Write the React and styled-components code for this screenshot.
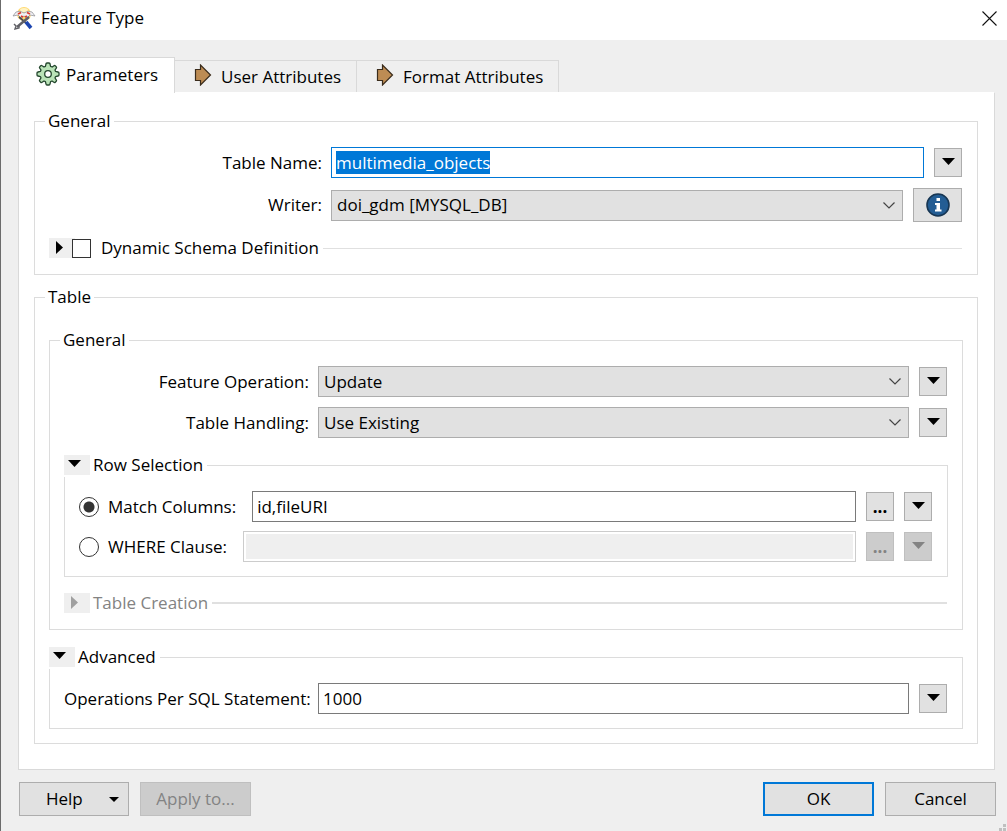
import React from 'react'
import styled, { createGlobalStyle } from 'styled-components'

const Page = createGlobalStyle`
  * {
    box-sizing: border-box;
  }
  body {
    margin: 0;
    background: #efefef;
    color: #000;
    font-family: 'Open Sans', 'Noto Sans', sans-serif;
    font-size: 17px;
    line-height: 24px;
  }
  button, input, select {
    font: inherit;
    color: inherit;
    margin: 0;
  }
`

const App = () => {
  return (
    <Dialog>
      <Page />
      <TitleBar>
        <AppIcon />
        <Title>Feature Type</Title>
        <CloseButton aria-label="Close">
          <svg width="15" height="15" viewBox="0 0 15 15" stroke="#111" strokeWidth="1.1">
            <path d="M0.5 0.5 14.5 14.5M14.5 0.5 0.5 14.5" />
          </svg>
        </CloseButton>
      </TitleBar>

      <Body>
        <Tabs role="tablist">
          <Tab role="tab" aria-selected="true" $active>
            <GearIcon />
            Parameters
          </Tab>
          <Tab role="tab" aria-selected="false">
            <ArrowIcon />
            User Attributes
          </Tab>
          <Tab role="tab" aria-selected="false">
            <ArrowIcon />
            Format Attributes
          </Tab>
        </Tabs>

        <Panel role="tabpanel">
          <Group>
            <Legend>General</Legend>
            <Fields $label="273px">
              <Label htmlFor="table-name">Table Name:</Label>
              <Row>
                <TextBox id="table-name" defaultValue="multimedia_objects" $focused autoFocus onFocus={(e) => e.target.select()} />
                <MenuButton />
              </Row>
              <Label htmlFor="writer">Writer:</Label>
              <Row>
                <DropDown id="writer" value="doi_gdm [MYSQL_DB]" />
                <InfoButton aria-label="Writer information">
                  <InfoIcon />
                </InfoButton>
              </Row>
            </Fields>
            <Section>
              <Expander aria-label="Expand">
                <TriangleRight />
              </Expander>
              <CheckLabel>
                <CheckBox type="checkbox" />
                Dynamic Schema Definition
              </CheckLabel>
              <Line />
            </Section>
          </Group>

          <Group $outer>
            <Legend>Table</Legend>
            <Group>
              <Legend>General</Legend>
              <Fields $label="245px">
                <Label htmlFor="operation">Feature Operation:</Label>
                <Row>
                  <DropDown id="operation" value="Update" />
                  <MenuButton />
                </Row>
                <Label htmlFor="handling">Table Handling:</Label>
                <Row>
                  <DropDown id="handling" value="Use Existing" />
                  <MenuButton />
                </Row>
              </Fields>

              <Group $fold>
                <FoldLegend>
                  <Expander aria-label="Collapse" $open>
                    <TriangleDown />
                  </Expander>
                  Row Selection
                </FoldLegend>
                <Choices>
                  <Row>
                    <RadioLabel>
                      <Radio type="radio" name="selection" defaultChecked />
                      Match Columns:
                    </RadioLabel>
                    <TextBox aria-label="Match Columns" defaultValue="id,fileURI" />
                    <MoreButton aria-label="Browse columns">...</MoreButton>
                    <MenuButton />
                  </Row>
                  <Row>
                    <RadioLabel>
                      <Radio type="radio" name="selection" />
                      WHERE Clause:
                    </RadioLabel>
                    <TextBox aria-label="WHERE Clause" disabled />
                    <MoreButton aria-label="Edit clause" disabled>...</MoreButton>
                    <MenuButton disabled />
                  </Row>
                </Choices>
              </Group>

              <Section $disabled>
                <Expander aria-label="Expand" disabled>
                  <TriangleRight />
                </Expander>
                <SectionTitle>Table Creation</SectionTitle>
                <Line $thick />
              </Section>
            </Group>

            <Group $fold>
              <FoldLegend>
                <Expander aria-label="Collapse" $open>
                  <TriangleDown />
                </Expander>
                Advanced
              </FoldLegend>
              <Fields $label="245px">
                <Label htmlFor="per-statement">Operations Per SQL Statement:</Label>
                <Row>
                  <TextBox id="per-statement" defaultValue="1000" />
                  <MenuButton />
                </Row>
              </Fields>
            </Group>
          </Group>
        </Panel>

        <Footer>
          <HelpButton>
            <span>Help</span>
            <svg width="10" height="5" viewBox="0 0 10 5">
              <path d="M0 0H10L5 5Z" />
            </svg>
          </HelpButton>
          <PushButton disabled>Apply to...</PushButton>
          <Spacer />
          <PushButton $primary>OK</PushButton>
          <PushButton>Cancel</PushButton>
        </Footer>
      </Body>
      <Grip width="7" height="7" viewBox="0 0 7 7" fill="#bfbfbf">
        <path d="M4 0h3v3h-3zM4 4h3v3h-3zM0 4h3v3h-3z" />
      </Grip>
    </Dialog>
  )
}

export default App

const DropDown = ({ id, value }) => (
  <SelectWrap>
    <Select id={id} defaultValue={value}>
      <option>{value}</option>
    </Select>
    <Chevron width="12" height="7" viewBox="0 0 12 7" fill="none" stroke="#444" strokeWidth="1.2">
      <path d="M0.5 0.5 6 6 11.5 0.5" />
    </Chevron>
  </SelectWrap>
)

const MenuButton = ({ disabled }) => (
  <SmallButton aria-label="More options" disabled={disabled}>
    <TriangleDown />
  </SmallButton>
)

const TriangleDown = () => (
  <svg width="13" height="7" viewBox="0 0 13 7" fill="currentColor">
    <path d="M0 0H13L6.5 7Z" />
  </svg>
)

const TriangleRight = () => (
  <svg width="7" height="13" viewBox="0 0 7 13" fill="currentColor">
    <path d="M0 0V13L7 6.5Z" />
  </svg>
)

const ArrowIcon = () => (
  <svg width="18" height="22" viewBox="0 0 18 22">
    <path d="M1.5 5.5H6.5V1L16.5 11 6.5 21V16.5H1.5Z" fill="#bd8c54" stroke="#3a2c1c" strokeWidth="1.2" />
  </svg>
)

const GearIcon = () => (
  <svg width="24" height="24" viewBox="0 0 24 24" fill="#b9e3b7" stroke="#24472e" strokeWidth="1.3" strokeLinejoin="round">
    <path d="M10 2Q10 1 11 1H13Q14 1 14 2L14.6 4.400 16.200 5 18 3.700Q18.700 3.200 19.400 3.900L20.200 4.700Q20.900 5.400 20.300 6.100L19 8 19.600 9.400 22 10Q23 10.100 23 11V13Q23 13.900 22 14L19.600 14.600 19 16 20.300 17.900Q20.900 18.600 20.200 19.300L19.300 20.200Q18.600 20.900 17.900 20.300L16 19 14.600 19.600 14 22Q13.900 23 13 23H11Q10.100 23 10 22L9.400 19.600 8 19 6.100 20.300Q5.400 20.900 4.700 20.200L3.800 19.300Q3.100 18.600 3.700 17.900L5 16 4.400 14.600 2 14Q1 13.900 1 13V11Q1 10.100 2 10L4.400 9.400 5 8 3.700 6.100Q3.100 5.400 3.800 4.700L4.700 3.800Q5.400 3.100 6.100 3.700L8 5 9.400 4.400Z" />
    <circle cx="12" cy="12" r="3.3" fill="#fff" />
  </svg>
)

const InfoIcon = () => (
  <svg width="24" height="24" viewBox="0 0 24 24">
    <circle cx="12" cy="12" r="11" fill="#235d94" stroke="#173653" strokeWidth="1.6" />
    <path d="M10.5 5H14V8H10.5ZM9 10H14V16.500H15.500V18.500H9V16.500H10.500V12H9Z" fill="#fff" />
  </svg>
)

const AppIcon = () => (
  <svg width="24" height="24" viewBox="0 0 24 24" fill="none">
    <circle cx="12" cy="8" r="7" fill="#ffd970" />
    <path d="M8 3Q12 1 16 3L15 6H9Z" fill="#fff3c4" />
    <path d="M1 10 4 6Q8 4 12 7Q16 4 20 6L23 10 18 9 15 12 12 10 9 12 6 9Z" fill="#f0f1f4" stroke="#96969c" strokeWidth="0.8" />
    <path d="M6 8 9 6.500M15 6.500 18 8M9 10 11 11M13 11 15 10" stroke="#dc3a2c" strokeWidth="1.8" />
    <path d="M7 11 14 17" stroke="#4c4c52" strokeWidth="1.8" />
    <path d="M14 16 19 22" stroke="#1c45b0" strokeWidth="3.6" />
    <path d="M17 11 5 21" stroke="#606066" strokeWidth="2.4" />
    <path d="M2 18 4 20 3 23 7 22 7 19" stroke="#606066" strokeWidth="1.4" />
  </svg>
)

const Dialog = styled.div`
  min-height: 100vh;
  position: relative;
  border-left: 1px solid #6b6b6b;
`

const TitleBar = styled.header`
  display: flex;
  align-items: center;
  height: 40px;
  padding: 0 10px 4px 11px;
  background: #fff;
`

const Title = styled.h1`
  flex: 1;
  margin: 0 0 0 5px;
  font-size: 17px;
  font-weight: 400;
`

const CloseButton = styled.button`
  display: flex;
  padding: 0;
  border: 0;
  background: none;
`

const Body = styled.main`
  padding: 17px 12px 16px 17px;
`

const Tabs = styled.div`
  display: flex;
  align-items: flex-end;
  position: relative;
`

const Tab = styled.button`
  display: flex;
  align-items: center;
  gap: ${(p) => (p.$active ? '6px' : '9px')};
  height: ${(p) => (p.$active ? '36px' : '32px')};
  margin-bottom: ${(p) => (p.$active ? '-1px' : '0')};
  padding: ${(p) => (p.$active ? '0 16px 1px 17px' : '0 15px 0 19px')};
  border: 1px solid #d9d9d9;
  border-bottom: 0;
  border-left-width: ${(p) => (p.$active ? '1px' : '0')};
  background: ${(p) => (p.$active ? '#fff' : '#efefef')};
  svg {
    margin-bottom: 3px;
  }
`

const Panel = styled.section`
  display: flex;
  flex-direction: column;
  gap: 10px;
  padding: 16px 16px 25px 15px;
  border: 1px solid #d9d9d9;
  border-top-color: #fff;
  background: #fff;
`

const Group = styled.fieldset`
  min-width: 0;
  margin: ${(p) => (p.$fold ? '15px 0 0' : '0')};
  padding: ${(p) => (p.$outer ? '19px 14px 14px' : '14px')};
  border: 1px solid #dcdcdc;
`

const Legend = styled.legend`
  margin-left: -4px;
  padding: 0 3px;
`

const FoldLegend = styled.legend`
  display: flex;
  align-items: center;
  gap: 3px;
  margin-left: -15px;
  padding: 0 4px 0 0;
`

const Fields = styled.div`
  display: grid;
  grid-template-columns: ${(p) => p.$label} 1fr;
  align-items: center;
  gap: 10px 9px;
  padding-right: 1px;
`

const Label = styled.label`
  text-align: right;
  white-space: nowrap;
`

const Row = styled.div`
  display: flex;
  align-items: center;
  gap: 10px;
`

const TextBox = styled.input`
  flex: 1;
  min-width: 0;
  height: 31px;
  padding: 0 4px;
  border: 1px solid ${(p) => (p.$focused ? '#0078d7' : '#7a7a7a')};
  border-radius: 0;
  outline: 0;
  background: #fff;
  &::selection {
    background: #0078d7;
    color: #fff;
  }
  &:disabled {
    border-color: #ccc;
    background: #efefef;
    box-shadow: inset 0 0 0 2px #fff;
  }
`

const SelectWrap = styled.div`
  display: flex;
  flex: 1;
  align-items: center;
  position: relative;
`

const Select = styled.select`
  flex: 1;
  height: 31px;
  padding: 0 5px;
  border: 1px solid #adadad;
  border-radius: 0;
  background: #e1e1e1;
  appearance: none;
`

const Chevron = styled.svg`
  position: absolute;
  right: 8px;
  pointer-events: none;
`

const SmallButton = styled.button`
  display: flex;
  align-items: center;
  justify-content: center;
  width: 28px;
  height: 29px;
  padding: 0 0 3px;
  border: 1px solid #adadad;
  background: #e1e1e1;
  &:disabled {
    border-color: #bfbfbf;
    background: #ccc;
    color: #838383;
  }
`

const MoreButton = styled(SmallButton)`
  padding: 0;
  font-weight: 700;
`

const InfoButton = styled.button`
  display: flex;
  align-items: center;
  justify-content: center;
  width: 49px;
  height: 34px;
  padding: 0;
  border: 1px solid #adadad;
  background: #e1e1e1;
`

const Section = styled.div`
  display: flex;
  align-items: center;
  margin-top: 14px;
  padding-right: 1px;
  color: ${(p) => (p.$disabled ? '#838383' : '#000')};
`

const SectionTitle = styled.span`
  margin-left: 3px;
`

const Expander = styled.button`
  display: flex;
  align-items: center;
  width: 26px;
  height: 20px;
  padding: ${(p) => (p.$open ? '0 0 3px 4px' : '0 0 2px 7px')};
  border: 0;
  background: #efefef;
  &:disabled {
    color: #a0a0a0;
  }
`

const Line = styled.div`
  flex: 1;
  height: ${(p) => (p.$thick ? '2px' : '1px')};
  margin-left: 4px;
  background: #e0e0e0;
`

const CheckLabel = styled.label`
  display: flex;
  align-items: center;
  gap: 10px;
  margin-left: -3px;
`

const CheckBox = styled.input`
  width: 19px;
  height: 19px;
  border: 1px solid #333;
  background: #fff;
  appearance: none;
`

const Choices = styled.div`
  display: flex;
  flex-direction: column;
  gap: 9px;
  padding-right: 1px;
`

const RadioLabel = styled.label`
  display: flex;
  align-items: center;
  gap: 9px;
  margin-right: 6px;
`

const Radio = styled.input`
  width: 20px;
  height: 20px;
  border: 1px solid #333;
  border-radius: 50%;
  background: #fff;
  appearance: none;
  &:checked {
    background: radial-gradient(circle, #333 5px, #fff 6px);
  }
`

const Footer = styled.footer`
  display: flex;
  gap: 11px;
  margin: 12px -1px 0 1px;
`

const PushButton = styled.button`
  width: 111px;
  height: 34px;
  padding: 0;
  border: ${(p) => (p.$primary ? '2px solid #0078d7' : '1px solid #adadad')};
  background: #e1e1e1;
  &:disabled {
    border-color: #bfbfbf;
    background: #ccc;
    color: #838383;
  }
`

const HelpButton = styled(PushButton)`
  display: flex;
  align-items: center;
  justify-content: space-between;
  width: 110px;
  padding: 0 9px 0 26px;
`

const Spacer = styled.div`
  flex: 1;
`

const Grip = styled.svg`
  position: absolute;
  right: 1px;
  bottom: 1px;
`
